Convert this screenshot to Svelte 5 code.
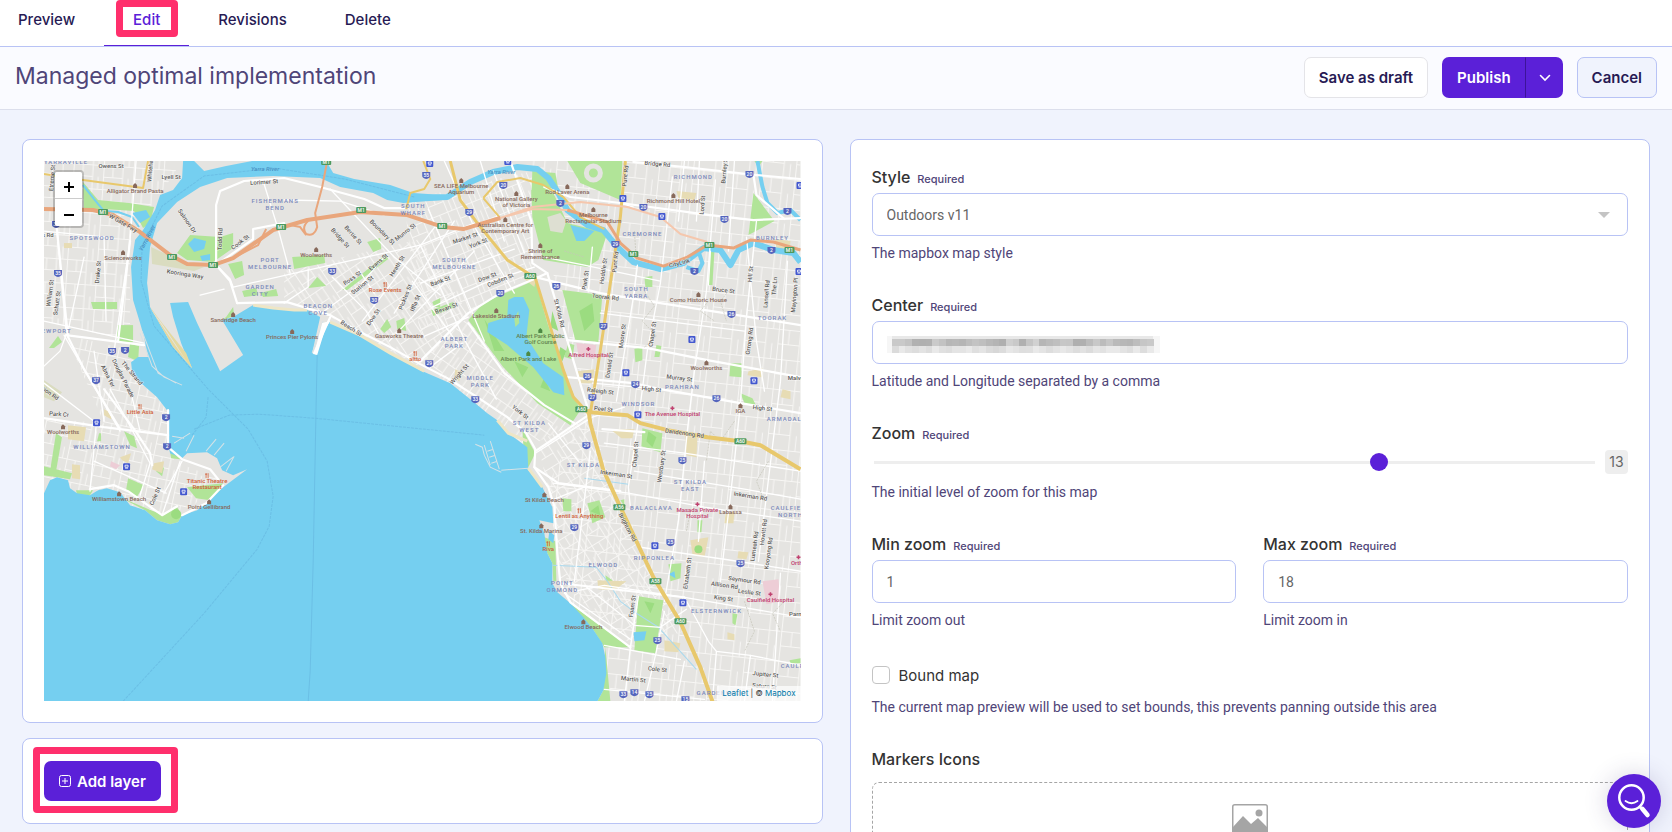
<script>
	import { onMount } from 'svelte';

	const tabs = ['Preview', 'Edit', 'Revisions', 'Delete'];
	let activeTab = 'Edit';

	let style = 'Outdoors v11';
	let center = '';
	let zoom = 13;
	let minZoom = 1;
	let maxZoom = 18;
	let boundMap = false;

	// Masked coordinates: grey level of every block in the two rows
	const maskTop = 'c9c9c3b1b0b1cac2b6b8b5bdc3bfb8b4afcfc9b0c5d1b6bbbfc7c6afb0bcc8bcc6bab7b5bdc6c9'.match(/../g);
	const maskBottom = 'dbe9e1dde3dde9e0dde4e4e9dfe4dbd7dce7e3dedfe9e4dde3e8e3dde2dce5e2e9e9e3dee9dde9'.match(/../g);

	// x, y, first line, second line
	const districts = [
		[22, 3, 'YARRAVILLE'],
		[231, 42, 'FISHERMANS', 'BEND'],
		[369, 47, 'SOUTH', 'WHARF'],
		[48, 79, 'SPOTSWOOD'],
		[226, 101, 'PORT', 'MELBOURNE'],
		[216, 128, 'GARDEN', 'CITY'],
		[274, 147, 'BEACON', 'COVE'],
		[10, 172, 'NEWPORT'],
		[58, 288, 'WILLIAMSTOWN'],
		[649, 18, 'RICHMOND'],
		[598, 75, 'CREMORNE'],
		[728, 79, 'BURNLEY'],
		[410, 101, 'SOUTH', 'MELBOURNE'],
		[592, 130, 'SOUTH', 'YARRA'],
		[728, 159, 'TOORAK'],
		[410, 180, 'ALBERT', 'PARK'],
		[436, 219, 'MIDDLE', 'PARK'],
		[638, 228, 'PRAHRAN'],
		[594, 245, 'WINDSOR'],
		[742, 260, 'ARMADALE'],
		[485, 264, 'ST KILDA', 'WEST'],
		[539, 306, 'ST KILDA'],
		[646, 323, 'ST KILDA', 'EAST'],
		[607, 349, 'BALACLAVA'],
		[746, 349, 'CAULFIELD', 'NORTH'],
		[610, 399, 'RIPPONLEA'],
		[559, 406, 'ELWOOD'],
		[518, 424, 'POINT', 'ORMOND'],
		[672, 452, 'ELSTERNWICK'],
		[756, 507, 'CAULFIELD'],
		[676, 534, 'GARDENVALE']
	];

	// x, y, angle, name
	const streets = [
		[67, 5, 0, 'Owens St'],
		[8, 17, -85, 'Etreme St'],
		[106, 10, -85, 'Whiteha'],
		[127, 16, 0, 'Lyell St'],
		[220, 21, -4, 'Lorimer St'],
		[143, 60, 55, 'Salmon Dr'],
		[79, 62, 30, 'W Gate Fwy'],
		[176, 78, -88, 'Todd Rd'],
		[196, 81, -38, 'Cook St'],
		[296, 77, 48, 'Bridge St'],
		[309, 74, 48, 'Bertie St'],
		[338, 71, 45, 'Boundary St'],
		[361, 71, -38, 'Munro St'],
		[334, 101, -40, 'Evans St'],
		[353, 105, -58, 'Heath St'],
		[308, 117, -35, 'Ross St'],
		[318, 124, -38, 'Station St'],
		[361, 136, -68, 'Pickles St'],
		[371, 142, -68, 'Iffla St'],
		[329, 156, -55, 'Dow St'],
		[307, 167, 33, 'Beach St'],
		[141, 113, 9, 'Kooringa Way'],
		[54, 111, -85, 'Drake St'],
		[6, 132, -82, 'William St'],
		[13, 142, -82, 'Schutt St'],
		[3, 74, 0, 'is Rd'],
		[64, 215, 63, 'Alma Ter'],
		[79, 217, 63, 'Douglas Parade'],
		[88, 212, 50, 'The Strand'],
		[6, 232, 35, 'sion Rd'],
		[15, 253, 4, 'Park Cr'],
		[111, 335, -66, 'Cole St'],
		[421, 77, -18, 'Market St'],
		[434, 82, -22, 'York St'],
		[443, 116, -20, 'Dow St'],
		[456, 119, -22, 'Cobden St'],
		[396, 120, -20, 'Bank St'],
		[402, 147, -20, 'Bevan St'],
		[515, 152, 76, 'St Kilda Rd'],
		[561, 136, 7, 'Toorak Rd'],
		[541, 119, -82, 'Park St'],
		[559, 110, -82, 'Hoddle St'],
		[571, 101, -84, 'Punt Rd'],
		[581, 15, -84, 'Punt Rd'],
		[613, 3, 5, 'Bridge Rd'],
		[680, 9, -85, 'Burnley St'],
		[658, 44, -85, 'Lord St'],
		[635, 102, -15, 'CityLink'],
		[679, 129, 7, 'Bruce St'],
		[706, 113, -85, 'Hill St'],
		[722, 133, -85, 'Lansell Rd'],
		[730, 125, -85, 'The Ln'],
		[750, 134, -85, 'Mayington Pl'],
		[705, 180, -82, 'Orrong Rd'],
		[578, 175, -82, 'Moore St'],
		[608, 173, -82, 'Chapel St'],
		[565, 204, -82, 'Donald St'],
		[415, 213, -48, 'Wright St'],
		[635, 217, 7, 'Murray St'],
		[556, 230, 7, 'Raleigh St'],
		[607, 228, 7, 'High St'],
		[559, 248, 7, 'Peel St'],
		[718, 247, 7, 'High St'],
		[476, 251, 38, 'York St'],
		[640, 272, 8, 'Dandenong Rd'],
		[591, 293, -85, 'Chapel St'],
		[617, 305, -82, 'Westbury St'],
		[572, 313, 9, 'Inkerman St'],
		[706, 335, 9, 'Inkerman Rd'],
		[583, 366, 62, 'Brighton Rd'],
		[710, 385, -82, 'Lumeah Rd'],
		[719, 371, -82, 'Howitt Rd'],
		[724, 392, -82, 'Kooyong Rd'],
		[643, 412, -82, 'Elizabeth St'],
		[700, 419, 8, 'Seymour Rd'],
		[680, 424, 8, 'Allison Rd'],
		[705, 431, 8, 'Leslie St'],
		[679, 437, 8, 'King St'],
		[588, 445, -82, 'Foam St'],
		[613, 508, 6, 'Cole St'],
		[589, 518, 6, 'Martin St'],
		[721, 513, 6, 'Jupiter St'],
		[720, 525, 6, 'Saturn St'],
		[754, 453, 0, 'Parnell'],
		[754, 217, 0, 'Malvern']
	];

	// x, y, kind, first line, second line
	const places = [
		[91, 32, 'shop', 'Alligator Brand Pasta'],
		[79, 99, 'shop', 'Scienceworks'],
		[272, 96, 'shop', 'Woolworths'],
		[189, 161, 'shop', 'Sandridge Beach'],
		[248, 178, 'shop', 'Princes Pier Pylons'],
		[341, 131, 'food', 'Rose Events'],
		[355, 177, 'shop', 'Gasworks Theatre'],
		[371, 200, 'food', 'altto'],
		[96, 253, 'food', 'Little Asia'],
		[19, 273, 'shop', 'Woolworths'],
		[163, 322, 'food', 'Titanic Theatre', 'Restaurant'],
		[75, 340, 'shop', 'Williamstown Beach'],
		[165, 348, 'shop', 'Point Gellibrand'],
		[417, 27, 'shop', 'SEA LIFE Melbourne', 'Aquarium'],
		[472, 40, 'shop', 'National Gallery', 'of Victoria'],
		[461, 66, 'shop', 'Australian Centre for', 'Contemporary Art'],
		[523, 33, 'shop', 'Rod Laver Arena'],
		[549, 56, 'shop', 'Melbourne', 'Rectangular Stadium'],
		[496, 92, 'shop', 'Shrine of', 'Remembrance'],
		[629, 42, 'shop', 'Richmond Hill Hotel'],
		[654, 141, 'shop', 'Como Historic House'],
		[452, 157, 'shop', 'Lakeside Stadium'],
		[496, 177, 'park', 'Albert Park Public', 'Golf Course'],
		[484, 200, 'park', 'Albert Park and Lake'],
		[544, 196, 'care', 'Alfred Hospital'],
		[662, 209, 'shop', 'Woolworths'],
		[628, 255, 'care', 'The Avenue Hospital'],
		[696, 252, 'shop', 'IGA'],
		[500, 341, 'shop', 'St Kilda Beach'],
		[535, 357, 'food', 'Lentil as Anything'],
		[497, 372, 'shop', 'St. Kilda Marina'],
		[504, 390, 'food', 'Riva'],
		[653, 351, 'care', 'Masada Private', 'Hospital'],
		[686, 353, 'shop', 'Labassa'],
		[539, 468, 'shop', 'Elwood Beach'],
		[726, 441, 'care', 'Caulfield Hospital'],
		[754, 404, 'care', 'Ortho']
	];

	const shields = [
		[14, 112, 35], [68, 190, 35], [81, 189, 2], [52, 219, 37], [122, 256, 2], [123, 285, 2],
		[288, 110, 33], [330, 139, 30], [385, 202, 29], [382, 14, 55], [12, 63, 35],
		[425, 51, 29], [459, 24, 20], [516, 42, 2], [571, 83, 29], [599, 46, 20], [680, 58, 20],
		[705, 13, 20], [743, 50, 2], [727, 89, 2], [650, 110, 2], [456, 132, 20], [512, 125, 26],
		[559, 165, 27], [687, 153, 26], [431, 238, 33], [543, 215, 26], [591, 223, 24],
		[548, 236, 27], [672, 237, 26], [542, 284, 29], [638, 299, 25], [530, 366, 29], [626, 381, 25],
		[696, 402, 25], [613, 479, 25], [579, 533, 33], [590, 531, 14], [605, 533, 25], [641, 538, 15]
	];

	const motorways = [
		[59, 51, 'M1'], [128, 96, 'M1'], [169, 104, 'M1'], [237, 66, 'M1'], [317, 49, 'M1'],
		[282, 1, 'M1'], [398, 65, 'M1'], [589, 93, 'M1'], [665, 84, 'M1'], [745, 89, 'M1'],
		[486, 115, 'A60'], [537, 248, 'A60'], [575, 346, 'A56'], [611, 420, 'A58'], [636, 460, 'A60'],
		[696, 280, 'A60']
	];

	const stations = [
		[52, 261], [82, 305], [139, 330], [385, 2], [578, 37], [617, 55], [647, 178], [581, 211],
		[709, 219], [593, 253], [610, 384], [638, 441], [463, 0], [754, 110], [755, 24]
	];

	const green = [
		'M39 21 54 39 85 42 110 46 106 62 99 67 90 50 60 48 40 50Z',
		'M133 92 146 74 176 76 189 72 189 87 169 101 143 99Z',
		'M47 141H73V148H49Z', 'M73 164H89V181H73Z', 'M86 183 95 185 94 200 84 196Z',
		'M248 96 280 94 281 102 250 108Z', 'M298 129 341 94 344 98 303 129Z',
		'M184 103 198 100 200 114 191 118Z', 'M198 130 212 127 214 134 200 136Z',
		'M216 132 232 128 234 135 219 136Z', 'M264 127 273 116 282 125Z', 'M323 81 336 77 337 88 329 91Z',
		'M189 146 182 156 178 159 190 155Z', 'M336 168 343 158 347 166 340 172Z',
		'M352 160 360 157 362 170 353 168Z', 'M388 141 396 137 396 146 390 146Z',
		'M5 187 14 175 18 181 10 187Z', 'M12 272 18 276 12 310 6 310Z', 'M0 305 28 312 26 318 0 314Z',
		'M32 329 49 329 46 334 33 333Z', 'M55 272H57V280H53Z', 'M80 270 90 275 93 287 86 284Z',
		'M84 317 100 324 92 337 82 329Z', 'M126 290 138 294 136 298 127 297Z',
		'M112 310 120 306 118 315Z', 'M76 336 119 354 133 346 138 354 134 361 126 363 113 359 101 349Z',
		'M143 326 179 322 176 330 166 339 152 337Z',
		'M461 132 491 119 503 162 523 219 536 249 526 264 493 242 459 206 424 159 439 142Z',
		'M518 129 558 134 554 181 531 179Z', 'M488 10 511 12 514 28 487 38Z',
		'M523 0H578L576 39 536 22Z', 'M487 29 509 32 523 62 563 72 554 99 543 106 499 99 488 56Z',
		'M709 32 730 60 704 74Z', 'M666 90 670 90 668 124 664 124Z', 'M598 267 618 272 616 291 597 285Z',
		'M543 342 555 339 561 356 548 362Z', 'M518 337 527 338 527 350 519 350Z',
		'M478 268 491 292 484 306 479 284Z', 'M500 376 511 380 512 420 509 420 508 402 502 390Z',
		'M524 441 586 486 560 486 548 467Z', 'M594 435 619 439 611 492 590 489Z',
		'M561 486 566 540H553L559 529Z', 'M624 403 637 402 636 417 626 420Z', 'M686 202 697 202 697 216 685 215Z',
		'M590 188 598 186 598 199 591 201Z', 'M612 184 617 185 615 196 610 196Z', 'M576 339 580 338 580 345Z',
		'M653 359 658 359 657 371 653 371Z', 'M745 499 756 497V502H746Z', 'M688 452 693 453 691 464 688 462Z',
		'M387 149 409 141 411 146 389 155Z', 'M561 414 568 419 566 425 562 422Z', 'M600 116 608 115 608 126 601 126Z',
		'M710 0H718L714 6Z', 'M524 182 530 184 528 198 520 196Z', 'M696 232 708 237 712 245 700 242Z'
	];

	const sand = [
		'M20 82H28V87H20Z', 'M24 264 42 266 40 280 24 278Z', 'M76 296 87 292 84 302 78 299Z',
		'M110 302 120 300 118 312 108 308Z', 'M28 303 36 304 36 318 28 317Z', 'M60 248 68 252 67 258 60 254Z',
		'M480 118 492 116 490 126Z', 'M533 210 550 208 548 222 534 222Z', 'M646 379 664 376 660 396 648 393Z',
		'M681 353 690 350 689 362 680 362Z', 'M553 419 582 420 570 429 554 428Z', 'M620 479 636 482 634 491 620 490Z',
		'M704 210 718 207 717 216 703 214Z', 'M641 274 653 276 652 296 642 294Z', 'M694 390 704 391 702 398 693 397Z',
		'M730 78 746 80 745 90 732 87Z', 'M738 228 746 230 746 238 736 236Z', 'M683 471 690 473 690 479 683 478Z',
		'M411 208 418 211 415 220 410 217Z', 'M566 268 590 268 588 277 577 277Z', 'M632 30 652 32 650 39 634 37Z'
	];

	const minorRoads = [
		'M189 126 286 104 376 84 430 62', 'M219 20 234 68 246 112', 'M172 104 186 118 189 126',
		'M286 28 350 96 396 134', 'M240 39 296 40 340 54', 'M264 108 264 126 240 142',
		'M156 134 180 128', 'M288 116 322 150 334 172', 'M314 108 330 132', 'M340 96 316 124 280 150',
		'M318 160 392 64', 'M350 152 410 60', 'M345 180 430 90', 'M368 120 416 186', 'M376 84 420 178 452 238',
		'M384 48 440 180', 'M400 0 428 62 470 132', 'M436 0 460 80', 'M388 146 440 122 490 106',
		'M376 122 470 88', 'M378 176 424 156', 'M418 182 386 206', 'M449 10 480 92',
		'M548 86 544 130', 'M593 104 590 130 572 240', 'M628 16 616 122 603 189 594 259 584 326 586 346',
		'M671 19 662 130 650 210 643 269 634 360 620 440', 'M666 90 664 124', 'M712 60 702 156 696 242 690 300 676 420',
		'M589 46 576 42', 'M640 0 634 60', 'M655 0 652 60', 'M690 0 684 90', 'M702 76 712 180 720 230',
		'M743 100 736 220 714 400', 'M500 96 540 104 616 120', 'M548 222 616 228', 'M556 152 700 170',
		'M0 70 62 76', 'M92 0 86 80 70 190', 'M0 160 100 182', 'M12 60 22 170', 'M40 96 24 170', 'M60 76 62 160',
		'M20 174 76 270', 'M0 205 16 190 22 174', 'M50 190 60 260', 'M0 222 50 260', 'M66 228 106 302', 'M88 236 96 270',
		'M52 266 46 330', 'M50 300 122 332', 'M136 300 118 354', 'M106 302 96 334', 'M120 332 138 300',
		'M491 292 548 256', 'M548 256 580 246', 'M504 262 534 300', 'M546 290 530 420', 'M509 322 584 332 660 346 756 360',
		'M560 282 640 292 756 310', 'M590 310 700 328 756 338', 'M529 430 560 424 640 436 756 456', 'M596 386 680 398 756 410',
		'M520 432 586 478', 'M540 424 590 464 616 466', 'M560 484 636 498', 'M586 486 580 540', 'M594 435 586 486',
		'M620 450 612 490 600 540', 'M616 466 642 448', 'M640 436 664 480 672 490 706 494 756 504', 'M706 494 700 540',
		'M640 500 632 540', 'M736 412 728 540', 'M560 528 660 538', 'M672 490 668 540', 'M510 338 540 326', 'M660 300 654 380'
	];

	const majorRoads = [
		'M193 142 243 141 286 154 316 171 346 186 376 203 403 217 433 236 463 256 482 272 491 288 490 306 504 326 510 345 513 392 516 422 526 441 586 486',
		'M193 142 186 120 172 104 172 44 176 30 200 20 240 17 276 26 320 38 340 47 360 47',
		'M172 104 209 78 209 68 240 62', 'M466 0 476 28 487 60 488 102 503 112 513 146 543 246',
		'M376 200 424 152 456 132 490 118 503 112', 'M491 116 556 132 616 142 693 154 756 164',
		'M523 216 589 222 616 228 696 242 756 252', 'M523 179 603 187 663 199 756 216',
		'M500 26 526 36 576 42 666 54 709 59 756 57', 'M589 1 640 6 712 14 756 18', 'M709 14 712 34 740 58',
		'M0 257 60 266 124 274', 'M124 249 124 286 138 298 166 308 174 318', 'M60 228 90 268 106 292 108 304',
		'M46 328 70 324 84 330 118 354 133 345', 'M138 354 162 342 179 324', 'M86 80 74 180', 'M22 174 100 184',
		'M424 162 460 212 500 244 530 262', 'M491 290 544 254', 'M490 306 514 322 576 330', 'M12 60 24 176 40 208 76 268',
		'M286 156 270 192', 'M558 268 600 271', 'M516 422 640 436'
	];

	// Parallel local streets, each pattern follows the angle of its district
	const blocks = [
		{ id: 'east', angle: 6, w: 34, h: 30, area: 'M480 0H756V540H553L500 330 543 246Z' },
		{ id: 'south', angle: -32, w: 26, h: 22, area: 'M493 280 546 256 576 346 640 470 590 486 516 422 508 346Z' },
		{ id: 'port', angle: -34, w: 24, h: 26, area: 'M240 110 376 78 424 152 376 206 286 156 240 140Z' },
		{ id: 'park', angle: 35, w: 24, h: 22, area: 'M376 200 424 156 530 262 483 286Z' },
		{ id: 'city', angle: -22, w: 26, h: 22, area: 'M360 40 488 10V110L424 156 376 178Z' },
		{ id: 'west', angle: 4, w: 30, h: 24, area: 'M0 0H138L86 80V180L0 160Z' },
		{ id: 'town', angle: 12, w: 28, h: 22, area: 'M22 174 90 190 124 250 130 300 180 320 126 362 0 318V257L60 262Z' }
	];

	function zoomIn() {
		if (zoom < maxZoom) zoom += 1;
	}

	function zoomOut() {
		if (zoom > minZoom) zoom -= 1;
	}

	onMount(() => {
		document.title = 'Managed optimal implementation';
	});
</script>

<div class="page">
	<nav class="tabs">
		{#each tabs as tab}
			<a href="#{tab.toLowerCase()}" class="tab" class:active={tab === activeTab} on:click={() => (activeTab = tab)}>
				<span class:marked={tab === 'Edit'}>{tab}</span>
			</a>
		{/each}
	</nav>

	<header class="toolbar">
		<h1>Managed optimal implementation</h1>
		<div class="actions">
			<button class="btn draft">Save as draft</button>
			<div class="split">
				<button class="btn publish">Publish</button>
				<button class="btn more" aria-label="More publish options">
					<svg width="12" height="8" viewBox="0 0 12 8"><path d="M1.5 1.5 6 6l4.5-4.5" fill="none" stroke="currentColor" stroke-width="1.6" stroke-linecap="round" /></svg>
				</button>
			</div>
			<button class="btn cancel">Cancel</button>
		</div>
	</header>

	<main class="columns">
		<div class="column">
			<section class="card map-card">
				<div class="map">
					<svg class="tiles" viewBox="0 0 756 540" role="img" aria-label="Map">
						<defs>
							{#each blocks as b}
								<pattern id={b.id} width={b.w} height={b.h} patternUnits="userSpaceOnUse" patternTransform="rotate({b.angle})">
									<path d="M0 .5H{b.w}M0 {b.h / 2}H{b.w * 0.65}M.5 0V{b.h}M{b.w * 0.32} 0V{b.h / 2}M{b.w * 0.65} 0V{b.h}M{b.w * 0.84} {b.h / 2}V{b.h}" fill="none" stroke="#f7f6f4" stroke-width="1" />
								</pattern>
							{/each}
						</defs>

						<rect width="756" height="540" fill="#e5e4e1" />
						{#each blocks as b}
							<path d={b.area} fill="url(#{b.id})" />
						{/each}
						{#each green as d}
							<path {d} fill="#b1e498" />
						{/each}
						{#each sand as d}
							<path {d} fill="#e7dcb4" />
						{/each}
						<g fill="#9bdc80">
							<path d="M440 158 460 190 450 190ZM470 200 484 206 478 216ZM500 216 506 230 496 226ZM508 150 514 170 506 166ZM535 150 548 142 550 160 540 170ZM604 270 612 276 608 286 602 280Z" />
							<circle cx="132" cy="353" r="5" /><circle cx="654" cy="388" r="4" />
							<path d="M516 186 522 190 518 200 514 194ZM600 440 610 442 606 452ZM546 350 554 344 556 354Z" />
						</g>
						<circle cx="549" cy="12" r="7" fill="#b1e498" stroke="#e5e4e1" stroke-width="5" />
						<path d="M503 56 516 52 522 60 518 72 506 70Z" fill="#dedfd2" />
						<path d="M718 420 734 418 736 440 722 443ZM532 182 552 184 550 198 534 194ZM67 300 76 304 72 308 66 305Z" fill="#edcdd6" />
						<path d="M107 86 143 103 160 106 150 110 108 103ZM0 219 18 231 10 240 0 236Z" fill="#dadcc0" />

						<!-- Bay and harbour -->
						<path
							d="M139 0 138 17 129 29 116 34 111 49 99 69 91 79 87 106 89 139 96 162 100 176 104 196 94 196 87 201 88 210 96 221 113 236 123 249 124 269 123 279 126 292 138 297 143 292 163 291 173 297 178 309 189 314 203 308 191 317 179 326 166 339 153 349 138 354 134 361 126 363 113 359 101 349 86 344 76 331 63 327 54 329 46 334 33 332 26 327 24 319 13 316 6 319 0 332V540H553L559 529 562 512 561 496 558 482 548 467 539 456 526 442 513 431 508 422V402L503 392 500 372 495 359 509 362 508 346 498 326 484 309 483 286 464 272 453 259 443 252 431 242 406 222 376 209 346 192 313 172 286 161 279 164 272 194 268 192 276 156 263 149 246 149 229 147 209 144 189 156 178 159 199 194 176 210 153 162 144 141 126 142 129 156 133 169 137 182 141 192 148 207 129 186 106 146 103 122 106 86 113 62 133 41 156 26 183 17 229 15 276 17 296 26 329 32 343 39 359 42 398 39V34L369 32 346 24 310 18 289 12 282 0H208L182 5 160 10 150 0Z"
							fill="#75cff0"
						/>
						<path d="M464 139 470 136 479 136 485 149 482 176 499 202 519 216 520 234 509 231 489 206 463 184 443 171 444 162 463 156Z" fill="#75cff0" />
						<path d="M470 158 474 150 475 162 471 166Z" fill="#b1e498" />
						<g fill="none" stroke="#75cff0" stroke-linejoin="round">
							<path d="M376 37 403 36 426 21 449 11 473 6 493 8 504 17 514 32 523 49 543 64 559 69 573 86 589 101 616 108 639 102 659 87 676 89 686 104 694 89 709 82 729 89 749 92 756 101" stroke-width="6" />
							<path d="M713 0 718 26 723 42 733 52 746 49 756 59" stroke-width="4" />
							<path d="M654 90 658 102 654 110 642 106" stroke-width="4" />
							<path d="M39 24 50 38 60 50 74 51 88 56 95 66" stroke-width="2" />
							<path d="M508 404 552 406 563 420 576 440 592 452 614 466 634 488 652 508M540 317 584 323" stroke="#a9d9ee" stroke-width="1" />
						</g>
						<path d="M88 52 102 49 106 56 96 62ZM144 83 150 77 162 80 160 88 150 91ZM156 95 166 93 166 99 158 100ZM526 64 550 70 540 80 532 80ZM589 471 602 470 600 479 590 480ZM624 413 630 410 631 417ZM505 370 510 374 509 382 504 378Z" fill="#75cff0" />
						<path d="M96 172 108 205 120 216 138 224M98 170 114 212 132 222M431 283 438 286 440 294 446 306 457 311M440 284 446 304M446 280 455 308M443 290 449 288M445 296 451 294M447 302 453 300M457 309 484 307M268 192 279 160M162 290 172 278M170 294 180 282M176 306 189 296M182 310 190 295M128 275 140 277M130 282 146 272M142 290 150 274" fill="none" stroke="#d5e2e6" stroke-width="1" />
						<path d="M106 146 129 186 148 207 142 192 118 162Z" fill="#e4d9a0" />
						<path d="M106 147 116 160 132 184 143 201 131 184Z" fill="#e5e4e1" />
						<path d="M270 193 278 162 286 160 281 168 273 194Z" fill="#fff" />
						<path d="M209 144 229 147 250 149 263 149M453 259 464 272 483 280M286 161 316 174 346 192 380 210M484 307 498 326" fill="none" stroke="#eee6c6" stroke-width="3" />
						<g fill="none" stroke="#6bbfe5" stroke-width="1" stroke-dasharray="3 1">
							<path d="M79 540 160 452 213 388 225 365 229 335 223 300 204 268 164 228 110 165 97 120 98 85 118 45 160 15 230 7 300 18 370 36" />
							<path d="M164 236 162 256 148 274 M150 268 185 254 215 253 270 257 390 269 440 274" />
							<path d="M273 194 272 240 269 400 266 510 264 540" stroke-dasharray="none" />
						</g>

						<g fill="none" stroke="#fff" stroke-linejoin="round" stroke-linecap="round">
							{#each minorRoads as d}
								<path {d} stroke-width="1.3" />
							{/each}
							{#each majorRoads as d}
								<path {d} stroke-width="2.2" />
							{/each}
						</g>
						<g fill="none" stroke="#c6c5b9" stroke-width=".7" stroke-dasharray="2 1">
							<path d="M600 130 610 145 598 160 612 175 600 186M664 140 656 150 670 160M520 90 540 96M690 260 676 280 666 270 662 300M724 300 712 320 720 340M646 350 642 370M740 440 728 452 736 470M700 440 710 470 700 490M590 70 592 100M684 130 676 140 682 160" />
						</g>
						<g fill="none" stroke="#e8c86c" stroke-linejoin="round">
							<path d="M581 0 576 56 566 122 556 189 546 252" stroke-width="3" />
							<path d="M406 0 416 39 433 62 463 99 491 117 503 156 519 209 529 236 544 252" stroke-width="3" />
							<path d="M544 248 546 262 559 309 576 346 609 416 636 461 656 506 668 540" stroke-width="4" />
							<path d="M546 251 583 254 596 262 623 269 663 276 696 280 716 284 756 308" stroke-width="4" />
							<path d="M379 0 386 18 380 28 366 32 362 48M439 37 453 21 476 17 499 24 519 36 536 56 560 68M439 37 456 57" stroke-width="2" />
							<path d="M0 13 39 19 99 27 104 0" stroke-width="2" />
						</g>
						<g fill="none" stroke="#e9a67c" stroke-linejoin="round">
							<path d="M456 57 488 46 536 41 583 46 616 56 636 73 663 81M456 57 488 48 523 49 563 61" stroke="#f5c7ad" stroke-width="2" />
							<path d="M0 48 49 49 69 54 96 71 126 94 143 103 169 104 189 97 229 69 263 59 316 51 363 54 399 66 419 68 456 57" stroke-width="4" />
							<path d="M523 49 563 61 576 82 593 97 619 105 643 96 663 84 689 87 706 79 729 81 756 89" stroke-width="3" />
							<path d="M283 0 278 26 271 52 273 66Q270 76 262 73 257 66 264 60M189 97 214 84 222 68M246 64 256 66 262 74" stroke-width="2" />
						</g>

						{#each stations as [x, y]}
							<rect x={x - 3} y={y - 3} width="7" height="7" rx="1" fill="#4257cf" />
							<path d="M{x - 1} {y - 1}h3v2h-3zM{x - 1} {y + 2}h3" fill="none" stroke="#fff" stroke-width=".8" />
						{/each}
						{#each shields as [x, y, n]}
							<path d="M{x - 4} {y - 3}H{x + 4}V{y + 1}Q{x + 4} {y + 3} {x} {y + 4}Q{x - 4} {y + 3} {x - 4} {y + 1}Z" fill="#5565bd" />
							<text class="badge" {x} y={y + 2}>{n}</text>
						{/each}
						{#each motorways as [x, y, n]}
							<rect x={x - n.length - 3} y={y - 3} width={n.length * 2 + 6} height="6" rx="1" fill="#4d9a5f" />
							<text class="badge" {x} y={y + 2}>{n}</text>
						{/each}

						{#each streets as [x, y, angle, name]}
							<text class="street" transform="translate({x} {y}) rotate({angle})" y="2">{name}</text>
						{/each}
						<text class="river" x="221" y="10">Yarra River</text>
						<text class="river" x="457" y="13">Yarra River</text>
						<text class="river" transform="translate(103 77) rotate(-62)" y="2">Yarra River</text>
						{#each places as [x, y, kind, first, second]}
							<g class={kind}>
								{#if kind === 'care'}
									<path d="M{x - 2} {y - 8}h4M{x} {y - 10}v4" fill="none" stroke="currentColor" stroke-width="1.5" />
								{:else if kind === 'food'}
									<path d="M{x - 1} {y - 10}v5M{x + 1} {y - 10}v5M{x - 2} {y - 9}h2" fill="none" stroke="currentColor" stroke-width=".8" />
								{:else}
									<path d="M{x - 2} {y - 8}l2-2 2 2v3h-4z" fill="currentColor" />
								{/if}
								<text {x} {y}>{first}</text>
								{#if second}<text {x} y={y + 6}>{second}</text>{/if}
							</g>
						{/each}
						{#each districts as [x, y, first, second]}
							<text class="district" {x} {y}>{first}</text>
							{#if second}<text class="district" {x} y={y + 7}>{second}</text>{/if}
						{/each}
					</svg>
					<div class="zoom-control">
						<button aria-label="Zoom in" on:click={zoomIn}>
							<svg width="12" height="12" viewBox="0 0 12 12"><path d="M6 1v10M1 6h10" stroke="#000" stroke-width="2" /></svg>
						</button>
						<button aria-label="Zoom out" on:click={zoomOut}>
							<svg width="12" height="12" viewBox="0 0 12 12"><path d="M1 6h10" stroke="#000" stroke-width="2" /></svg>
						</button>
					</div>
					<div class="attribution"><a href="#leaflet">Leaflet</a> | © <a href="#mapbox">Mapbox</a></div>
				</div>
			</section>

			<section class="card layers">
				<div class="layer-action">
					<button class="btn add">
						<svg width="12" height="12" viewBox="0 0 12 12" fill="none" stroke="currentColor"><rect x=".5" y=".5" width="11" height="11" rx="2" /><path d="M6 3v6M3 6h6" /></svg>
						Add layer
					</button>
				</div>
			</section>
		</div>

		<section class="card form">
			<div class="field">
				<div class="label"><label for="style">Style</label><small>Required</small></div>
				<div class="control">
					<select id="style" bind:value={style}>
						<option>Outdoors v11</option>
						<option>Streets v11</option>
					</select>
					<svg class="caret" width="12" height="6" viewBox="0 0 12 6"><path d="M0 0h12L6 6z" fill="#c4c4c4" /></svg>
				</div>
				<p>The mapbox map style</p>
			</div>

			<div class="field">
				<div class="label"><label for="center">Center</label><small>Required</small></div>
				<div class="control">
					<input id="center" type="text" bind:value={center} />
					<svg class="mask" width="273" height="17" viewBox="0 0 273 17" shape-rendering="crispEdges">
						<rect width="273" height="17" fill="#f6f6f6" />
						<rect x="5" width="261" height="3" fill="#e8e8e8" />
						{#each maskTop as c, i}
							<rect x={5 + i * 6.7} y="3" width="7" height="7" fill="#{c}{c}{c}" />
						{/each}
						{#each maskBottom as c, i}
							<rect x={5 + i * 6.7} y="10" width="7" height="7" fill="#{c}{c}{c}" />
						{/each}
					</svg>
				</div>
				<p>Latitude and Longitude separated by a comma</p>
			</div>

			<div class="field">
				<div class="label"><label for="zoom">Zoom</label><small>Required</small></div>
				<div class="slider">
					<input id="zoom" type="range" min="1" max="18" bind:value={zoom} />
					<output for="zoom">{zoom}</output>
				</div>
				<p>The initial level of zoom for this map</p>
			</div>

			<div class="pair">
				<div class="field">
					<div class="label"><label for="min">Min zoom</label><small>Required</small></div>
					<input id="min" type="text" bind:value={minZoom} />
					<p>Limit zoom out</p>
				</div>
				<div class="field">
					<div class="label"><label for="max">Max zoom</label><small>Required</small></div>
					<input id="max" type="text" bind:value={maxZoom} />
					<p>Limit zoom in</p>
				</div>
			</div>

			<div class="field">
				<label class="check"><input type="checkbox" bind:checked={boundMap} />Bound map</label>
				<p>The current map preview will be used to set bounds, this prevents panning outside this area</p>
			</div>

			<div class="field">
				<div class="label"><span>Markers Icons</span></div>
				<div class="dropzone">
					<svg width="36" height="30" viewBox="0 0 36 30"><rect x=".75" y=".75" width="34.5" height="28.5" rx="2" fill="none" stroke="#a5a5a5" stroke-width="1.5" /><circle cx="27" cy="9" r="3.5" fill="#a5a5a5" /><path d="M1 23 11 12l8 8 7-6 9 9v6H1z" fill="#a5a5a5" /></svg>
				</div>
			</div>
		</section>
	</main>

	<button class="help" aria-label="Search help">
		<svg width="54" height="54" viewBox="0 0 54 54" fill="none" stroke="#fff" stroke-linecap="round">
			<circle cx="24.5" cy="23.5" r="12.2" stroke-width="2.5" />
			<path d="M18.5 27q6 4.500 12 0" stroke-width="1.8" />
			<path d="m33 33 2 2" stroke-width="3" />
			<path d="m35.5 35 5 6" stroke-width="4.5" />
		</svg>
	</button>
</div>

<style>
	:global(body) {
		margin: 0;
		background: #f0f3fd;
	}

	.page {
		height: 100vh;
		overflow: hidden;
		font-family: Inter, 'Liberation Sans', sans-serif;
		font-size: 15px;
		color: #271a54;
		background: #f0f3fd;
	}

	.page *,
	.page *::before,
	.page *::after {
		box-sizing: border-box;
	}

	button,
	input,
	select {
		font: inherit;
	}

	svg {
		display: block;
	}

	.tabs {
		display: flex;
		height: 47px;
		padding-left: 18px;
		gap: 58px;
		background: #fff;
		border-bottom: 1px solid #b8c3f5;
	}

	.tab {
		position: relative;
		height: 46px;
		line-height: 40px;
		font-weight: 500;
		color: inherit;
		text-decoration: none;
	}

	.tab.active {
		color: #5b20d8;
	}

	.tab.active::after {
		content: '';
		position: absolute;
		left: -29px;
		right: -29px;
		bottom: 0;
		height: 1px;
		background: #5b20d8;
	}

	.marked::before {
		content: '';
		position: absolute;
		top: 0;
		left: -17px;
		right: -18px;
		height: 37px;
		border: 7px solid #ff2f6c;
		border-radius: 4px;
	}

	.toolbar {
		display: flex;
		justify-content: space-between;
		height: 63px;
		padding: 10px 15px 0;
		background: #fafbff;
		border-bottom: 1px solid #dcdfec;
	}

	h1 {
		margin: 0;
		font-size: 23px;
		line-height: 38px;
		font-weight: 400;
		color: #4f4578;
	}

	.actions {
		display: flex;
		gap: 14px;
	}

	.btn {
		height: 41px;
		padding: 0 14px;
		border: 1px solid transparent;
		border-radius: 7px;
		font-weight: 600;
		color: inherit;
		white-space: nowrap;
	}

	.draft {
		background: #fff;
		border-color: #e4e4e8;
	}

	.cancel {
		background: #f0f3fd;
		border-color: #b8c3f5;
	}

	.split {
		display: flex;
	}

	.publish,
	.more,
	.add {
		color: #fff;
		background: #5b20d8;
	}

	.publish {
		border-radius: 7px 0 0 7px;
		border-right-color: #3d1399;
	}

	.more {
		width: 37px;
		padding: 0 12px;
		border-radius: 0 7px 7px 0;
	}

	.columns {
		display: grid;
		grid-template-columns: 1fr 1fr;
		gap: 27px;
		padding: 29px 22px 0;
	}

	.column {
		display: flex;
		flex-direction: column;
		gap: 15px;
	}

	.card {
		background: #fff;
		border: 1px solid #b8c3f5;
		border-radius: 8px;
	}

	.map-card {
		padding: 21px;
	}

	.map {
		position: relative;
	}

	.tiles {
		width: 100%;
	}

	.tiles text {
		font-family: Roboto, 'Liberation Sans', sans-serif;
		font-size: 6px;
		font-weight: 500;
		text-anchor: middle;
	}

	.tiles .district {
		fill: #7b89bb;
		letter-spacing: 1px;
	}

	.tiles .street {
		fill: #5d5b59;
		stroke: rgba(255, 255, 255, 0.6);
		stroke-width: 1px;
		paint-order: stroke;
	}

	.tiles .river {
		fill: #4a91c4;
		font-style: italic;
	}

	.tiles .badge {
		fill: #fff;
		font-size: 5px;
	}

	.shop {
		color: #87695b;
		fill: #87695b;
	}

	.park {
		color: #4d8a44;
		fill: #63824e;
	}

	.food {
		color: #cf5f38;
		fill: #cf5f38;
	}

	.care {
		color: #c0416f;
		fill: #c0416f;
	}

	.zoom-control {
		position: absolute;
		top: 9px;
		left: 9px;
		border: 2px solid rgba(0, 0, 0, 0.2);
		border-radius: 4px;
		background-clip: padding-box;
	}

	.zoom-control button {
		display: flex;
		align-items: center;
		justify-content: center;
		width: 27px;
		height: 27px;
		padding: 4px 0 0;
		border: 0;
		border-radius: 0 0 2px 2px;
		background: #fff;
	}

	.zoom-control button:first-child {
		border-bottom: 1px solid #ccc;
		border-radius: 2px 2px 0 0;
	}

	.attribution {
		position: absolute;
		right: 0;
		bottom: 0;
		padding: 0 5px;
		font-size: 8px;
		line-height: 15px;
		color: #333;
		background: rgba(255, 255, 255, 0.7);
	}

	.attribution a {
		color: #0078a8;
		text-decoration: none;
	}

	.layers {
		padding: 8px 10px 10px;
	}

	.layer-action {
		width: fit-content;
		padding: 7px 10px 5px 4px;
		border: 7px solid #ff2f6c;
		border-radius: 4px;
	}

	.add {
		display: flex;
		align-items: center;
		gap: 6px;
		height: 40px;
	}

	.form {
		display: flex;
		flex-direction: column;
		gap: 30px;
		padding: 25px 21px 21px;
	}

	.label {
		display: flex;
		align-items: baseline;
		gap: 7px;
		height: 24px;
		margin-bottom: 4px;
		font-size: 16px;
		line-height: 24px;
		font-weight: 500;
		color: #333;
	}

	.label small {
		font-size: 11px;
		line-height: 16px;
		color: #4f4578;
	}

	.control {
		position: relative;
	}

	input[type='text'],
	select {
		display: block;
		width: 100%;
		height: 43px;
		padding: 0 14px;
		border: 1px solid #b8c3f5;
		border-radius: 7px;
		font-family: Roboto, 'Liberation Sans', sans-serif;
		font-size: 14px;
		color: #666;
		background: #fff;
		appearance: none;
	}

	.caret {
		position: absolute;
		right: 18px;
		top: 19px;
	}

	.mask {
		position: absolute;
		left: 15px;
		top: 15px;
	}

	p {
		margin: 7px 0 0;
		font-family: Roboto, 'Liberation Sans', sans-serif;
		font-size: 14px;
		line-height: 20px;
		color: #4f4578;
	}

	.slider {
		display: flex;
		align-items: center;
		gap: 10px;
		height: 26px;
	}

	input[type='range'] {
		flex: 1;
		height: 18px;
		margin: 0 0 0 2px;
		appearance: none;
		background: linear-gradient(#eee, #eee) center / 100% 3px no-repeat;
	}

	input[type='range']::-webkit-slider-thumb {
		appearance: none;
		width: 18px;
		height: 18px;
		border-radius: 50%;
		background: #5b20d8;
	}

	output {
		width: 23px;
		border-radius: 4px;
		font-size: 14px;
		line-height: 24px;
		text-align: center;
		color: #666;
		background: #eee;
	}

	.pair {
		display: grid;
		grid-template-columns: 1fr 1fr;
		gap: 27px;
	}

	.check {
		display: flex;
		align-items: center;
		gap: 9px;
		height: 30px;
		color: #333;
	}

	.check input {
		width: 18px;
		height: 18px;
		margin: 0;
		border: 1px solid #c4c4c4;
		border-radius: 4px;
		appearance: none;
	}

	.check input:checked {
		background: #5b20d8;
	}

	.dropzone {
		display: flex;
		justify-content: center;
		margin-top: 11px;
		padding: 21px;
		border: 1px dashed #a5a5a5;
		border-radius: 7px;
	}

	.help {
		position: fixed;
		right: 11px;
		bottom: 4px;
		width: 54px;
		height: 54px;
		padding: 0;
		border: 0;
		border-radius: 50%;
		background: #5b20d8;
		box-shadow: 0 0 24px rgba(60, 50, 110, 0.2);
	}
</style>
